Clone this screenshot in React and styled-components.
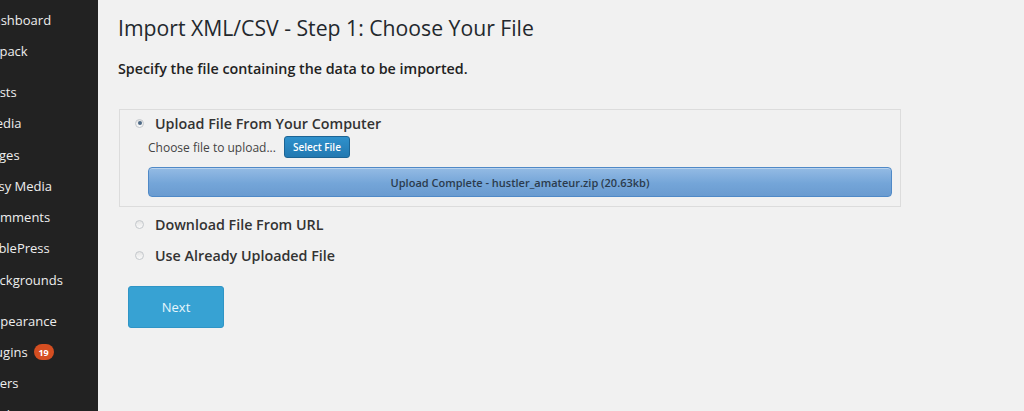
import React from 'react'
import styled, { createGlobalStyle } from 'styled-components'

const GlobalStyle = createGlobalStyle`
  html, body {
    margin: 0;
    padding: 0;
    background: #f1f1f1;
    font-family: "Open Sans", "Liberation Sans", sans-serif;
  }
`

const menu = [
  { label: 'Dashboard' },
  { label: 'Jetpack', sep: true },
  { label: 'Posts' },
  { label: 'Media' },
  { label: 'Pages' },
  { label: 'Easy Media' },
  { label: 'Comments' },
  { label: 'TablePress' },
  { label: 'Backgrounds', sep: true },
  { label: 'Appearance' },
  { label: 'Plugins', badge: 19 },
  { label: 'Users' },
  { label: 'Tools' },
]

function App() {
  return (
    <Page>
      <GlobalStyle />
      <Sidebar>
        {menu.map((m) => (
          <MenuItem key={m.label} $sep={m.sep}>
            <MenuText>{m.label}</MenuText>
            {m.badge && <Badge>{m.badge}</Badge>}
          </MenuItem>
        ))}
      </Sidebar>
      <Main>
        <Title>Import XML/CSV - Step 1: Choose Your File</Title>
        <Lead>Specify the file containing the data to be imported.</Lead>

        <UploadBox>
          <OptionRow $h={24}>
            <Radio $checked />
            <OptionLabel>Upload File From Your Computer</OptionLabel>
          </OptionRow>
          <UploadInner>
            <ChooseRow>
              <ChooseText>Choose file to upload...</ChooseText>
              <SelectButton>Select File</SelectButton>
            </ChooseRow>
            <Progress>Upload Complete - hustler_amateur.zip (20.63kb)</Progress>
          </UploadInner>
        </UploadBox>

        <OptionList>
          <OptionRow $h={31}>
            <Radio />
            <OptionLabel>Download File From URL</OptionLabel>
          </OptionRow>
          <OptionRow $h={31}>
            <Radio />
            <OptionLabel>Use Already Uploaded File</OptionLabel>
          </OptionRow>
        </OptionList>

        <NextButton>Next</NextButton>
      </Main>
    </Page>
  )
}

const Page = styled.div`
  display: flex;
  width: 1024px;
  height: 411px;
  overflow: hidden;
`

const Sidebar = styled.nav`
  width: 98px;
  flex-shrink: 0;
  background: #222;
  padding-top: 4px;
  overflow: hidden;
`

const MenuItem = styled.div`
  display: flex;
  align-items: center;
  height: 31.25px;
  margin-bottom: ${(p) => (p.$sep ? '10px' : '0')};
  white-space: nowrap;
`

const MenuText = styled.span`
  margin-left: -16px;
  font-size: 13px;
  color: #eee;
`

const Badge = styled.span`
  display: inline-flex;
  align-items: center;
  justify-content: center;
  margin-left: 6px;
  width: 20px;
  height: 16px;
  border-radius: 8px;
  background: #d54e21;
  color: #fff;
  font-size: 9px;
  font-weight: 700;
`

const Main = styled.main`
  flex: 1;
  padding: 13px 0 0 20px;
`

const Title = styled.h1`
  margin: 0;
  font-size: 21.2px;
  line-height: 30px;
  font-weight: 400;
  color: #23282d;
`

const Lead = styled.p`
  margin: 16px 0 30px;
  font-size: 14.3px;
  line-height: 20px;
  font-weight: 600;
  color: #222;
`

const UploadBox = styled.div`
  width: 757px;
  margin-left: 1px;
  border: 1px solid #dcdcdc;
  padding: 1px 8px 9px 15px;
`

const OptionRow = styled.label`
  display: flex;
  align-items: center;
  height: ${(p) => p.$h}px;
`

const Radio = styled.span`
  position: relative;
  width: 9px;
  height: 9px;
  border-radius: 50%;
  border: 1px solid #c4c8cc;
  background: linear-gradient(#e4e4e4, #fafafa);
  box-sizing: border-box;
  margin-right: 11px;

  &::after {
    content: '';
    display: ${(p) => (p.$checked ? 'block' : 'none')};
    position: absolute;
    left: 1.5px;
    top: 1.5px;
    width: 4px;
    height: 4px;
    border-radius: 50%;
    background: #4e6a86;
  }
`

const OptionLabel = styled.span`
  font-size: 14.3px;
  font-weight: 600;
  color: #333;
`

const UploadInner = styled.div`
  padding-left: 13px;
`

const ChooseRow = styled.div`
  display: flex;
  align-items: center;
  height: 24px;
  gap: 8px;
`

const ChooseText = styled.span`
  font-size: 12px;
  color: #444;
`

const SelectButton = styled.button`
  height: 22px;
  padding: 0 8px;
  border: 1px solid #1c6494;
  border-radius: 3px;
  background: linear-gradient(#2f91cc, #2379b1);
  color: #fff;
  font-family: inherit;
  font-size: 10px;
  font-weight: 600;
`

const Progress = styled.div`
  margin-top: 8px;
  height: 30px;
  box-sizing: border-box;
  border: 1px solid #4f89c7;
  border-radius: 4px;
  background: linear-gradient(#94bbe4, #74a5d8 55%, #6a9bd0);
  box-shadow: inset 0 1px 0 rgba(255, 255, 255, 0.35);
  display: flex;
  align-items: center;
  justify-content: center;
  font-size: 11px;
  font-weight: 600;
  color: #2b3b4d;
`

const OptionList = styled.div`
  margin: 2px 0 0 1px;
  padding-left: 16px;
`

const NextButton = styled.button`
  display: block;
  margin: 15px 0 0 10px;
  width: 96px;
  height: 42px;
  border: 1px solid #2f95c6;
  border-radius: 3px;
  background: #37a2d3;
  color: #e8f6fc;
  font-family: inherit;
  font-size: 13px;
`

export default App
